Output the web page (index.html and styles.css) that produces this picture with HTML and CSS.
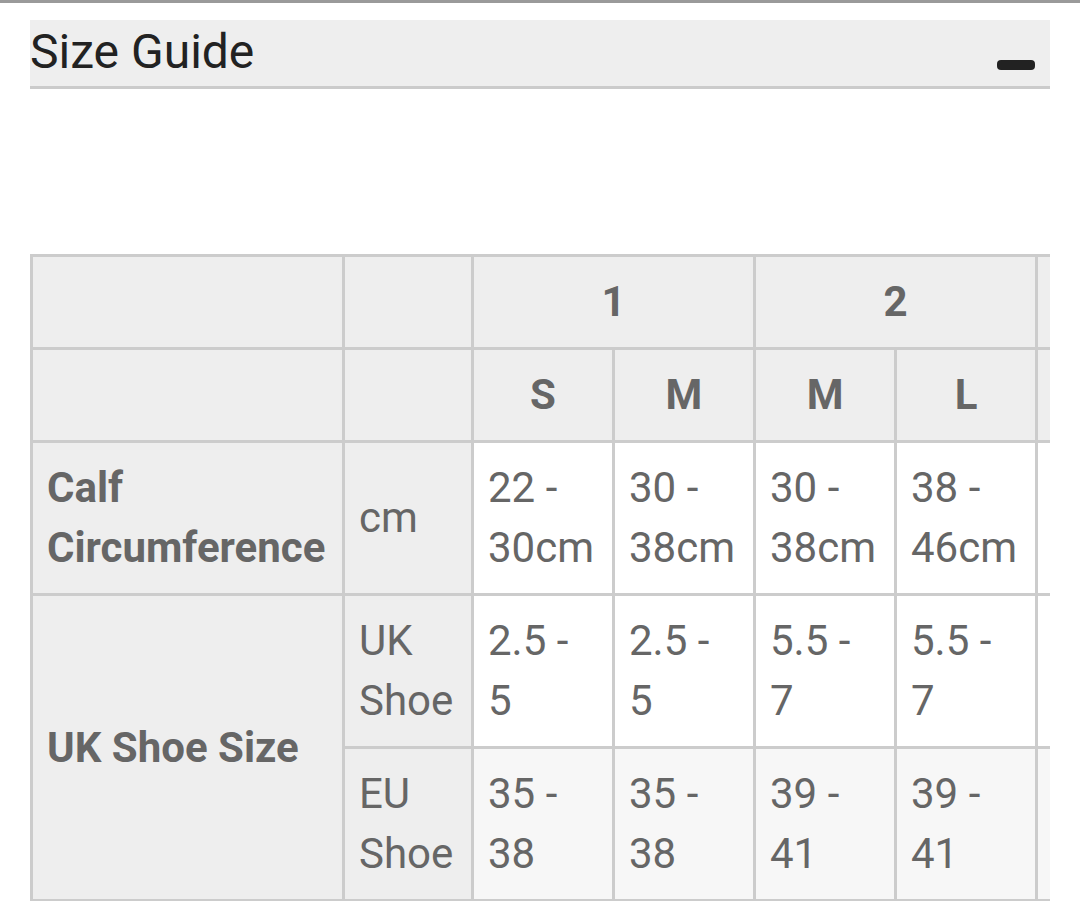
FILE: index.html
```html
<!DOCTYPE html>
<html lang="en">
<head>
<meta charset="utf-8">
<title>Size Guide</title>
<link rel="stylesheet" href="styles.css">
</head>
<body>
<div class="topline"></div>
<main class="page">
  <div class="accordion-head">
    <h2 class="accordion-title">Size Guide</h2>
    <span class="collapse-icon" aria-label="collapse"></span>
  </div>
  <div class="table-wrap">
    <table class="size-table">
      <colgroup>
        <col class="c-label">
        <col class="c-unit">
        <col class="c-val">
        <col class="c-val">
        <col class="c-val">
        <col class="c-val">
        <col class="c-val">
      </colgroup>
      <tr class="head">
        <td></td>
        <td></td>
        <th colspan="2">1</th>
        <th colspan="2">2</th>
        <td></td>
      </tr>
      <tr class="head">
        <td></td>
        <td></td>
        <th>S</th>
        <th>M</th>
        <th>M</th>
        <th>L</th>
        <td></td>
      </tr>
      <tr class="body">
        <th class="label">Calf Circumference</th>
        <td class="unit">cm</td>
        <td>22 - 30cm</td>
        <td>30 - 38cm</td>
        <td>30 - 38cm</td>
        <td>38 - 46cm</td>
        <td></td>
      </tr>
      <tr class="body">
        <th class="label" rowspan="2">UK Shoe Size</th>
        <td class="unit">UK Shoe</td>
        <td>2.5 - 5</td>
        <td>2.5 - 5</td>
        <td>5.5 - 7</td>
        <td>5.5 - 7</td>
        <td></td>
      </tr>
      <tr class="body alt">
        <td class="unit">EU Shoe</td>
        <td>35 - 38</td>
        <td>35 - 38</td>
        <td>39 - 41</td>
        <td>39 - 41</td>
        <td></td>
      </tr>
    </table>
  </div>
</main>
</body>
</html>
```

FILE: styles.css
```css
html, body {
  margin: 0;
  padding: 0;
  background: #ffffff;
}

body {
  font-family: Roboto, "Liberation Sans", Arial, sans-serif;
  color: #222222;
}

.topline {
  height: 3px;
  background: #9a9a9a;
}

.page {
  padding: 17px 30px 0 30px;
}

.accordion-head {
  display: flex;
  justify-content: space-between;
  height: 66px;
  background: #eeeeee;
  border-bottom: 3px solid #cbcbcb;
}

.accordion-title {
  margin: 0;
  padding-top: 5px;
  font-size: 48px;
  font-weight: 400;
  line-height: 54px;
  color: #222222;
}

.collapse-icon {
  align-self: flex-end;
  width: 38px;
  height: 10px;
  margin: 0 15px 16px 0;
  border-radius: 4px;
  background: #222222;
}

.table-wrap {
  margin-top: 165px;
  width: 1020px;
  overflow: hidden;
}

.size-table {
  table-layout: fixed;
  border-collapse: separate;
  border-spacing: 0;
  width: 1100px;
  border-top: 3px solid #cccccc;
  border-left: 3px solid #cccccc;
  font-size: 42px;
  line-height: 60px;
  color: #666666;
}

.c-label { width: 312px; }
.c-unit { width: 129px; }
.c-val { width: 141px; }

.size-table th,
.size-table td {
  box-sizing: border-box;
  padding: 15px 16px 15px 14px;
  border-right: 3px solid #cccccc;
  border-bottom: 3px solid #cccccc;
  vertical-align: middle;
  text-align: left;
  font-weight: 400;
}

.head th,
.head td {
  background: #eeeeee;
}

.head th {
  text-align: center;
  font-weight: 700;
  padding-left: 15px;
  padding-right: 15px;
}

.body td {
  background: #ffffff;
}

.body.alt td {
  background: #f7f7f7;
}

.size-table th.label {
  background: #eeeeee;
  font-weight: 700;
}

.size-table td.unit {
  background: #eeeeee;
}
```
